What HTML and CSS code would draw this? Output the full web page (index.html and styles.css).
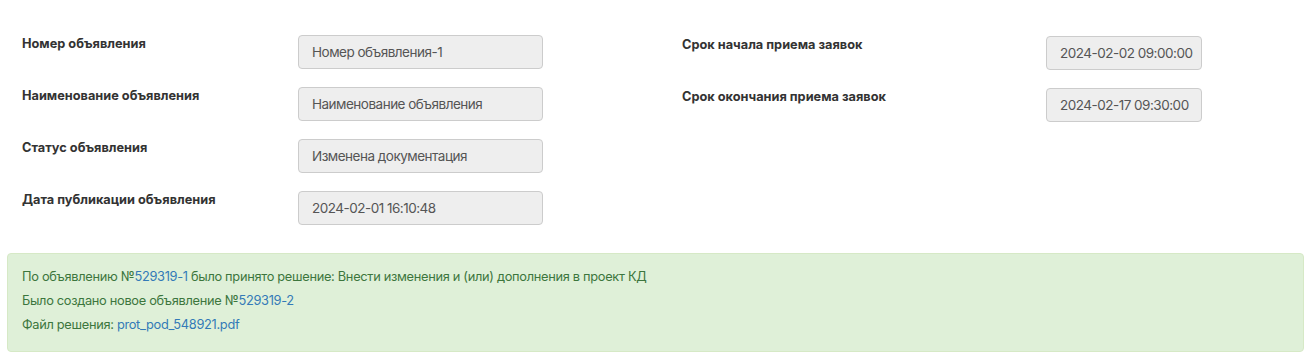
FILE: index.html
```html
<!DOCTYPE html>
<html lang="ru">
<head>
    <meta charset="UTF-8">
    <meta name="viewport" content="width=device-width, initial-scale=1.0">
    <title>Объявление</title>
    <link rel="stylesheet" href="styles.css">
</head>
<body>
    <div class="page">
        <div class="form">
            <div class="form-col form-col-left">
                <div class="field">
                    <div class="field-label">Номер объявления</div>
                    <div class="field-input">Номер объявления-1</div>
                </div>
                <div class="field">
                    <div class="field-label">Наименование объявления</div>
                    <div class="field-input">Наименование объявления</div>
                </div>
                <div class="field">
                    <div class="field-label">Статус объявления</div>
                    <div class="field-input">Изменена документация</div>
                </div>
                <div class="field">
                    <div class="field-label">Дата публикации объявления</div>
                    <div class="field-input">2024-02-01 16:10:48</div>
                </div>
            </div>
            <div class="form-col form-col-right">
                <div class="field">
                    <div class="field-label">Срок начала приема заявок</div>
                    <div class="field-input field-input-date">2024-02-02 09:00:00</div>
                </div>
                <div class="field">
                    <div class="field-label">Срок окончания приема заявок</div>
                    <div class="field-input field-input-date">2024-02-17 09:30:00</div>
                </div>
            </div>
        </div>

        <div class="alert-success">
            <p>По объявлению №<a href="#">529319-1</a> было принято решение: Внести изменения и (или) дополнения в проект КД</p>
            <p>Было создано новое объявление №<a href="#">529319-2</a></p>
            <p>Файл решения: <a href="#">prot_pod_548921.pdf</a></p>
        </div>
    </div>
</body>
</html>
```

FILE: styles.css
```css
body {
    margin: 0;
    padding: 0;
    font-family: Inter, 'Liberation Sans', sans-serif;
    background: #fff;
    color: #333;
}

.page {
    padding: 35px 1px 0 7px;
}

.form {
    display: flex;
}

.form-col {
    display: flex;
    flex-direction: column;
    gap: 18px;
}

.form-col-left {
    width: 660px;
    padding-left: 15px;
}

.form-col-right {
    margin-top: 1px;
}

.field {
    display: flex;
    align-items: flex-start;
}

.form-col-left .field-label {
    width: 276px;
}

.form-col-right .field-label {
    width: 364px;
}

.field-label {
    font-size: 12.75px;
    font-weight: 700;
    line-height: 18px;
    color: #333;
}

.field-input {
    box-sizing: border-box;
    width: 245px;
    height: 34px;
    padding: 0 13px;
    background: #eee;
    border: 1px solid #ccc;
    border-radius: 4px;
    font-size: 13.5px;
    letter-spacing: -0.5px;
    line-height: 32px;
    color: #555;
    white-space: nowrap;
}

.field-input-date {
    width: 156px;
}

.alert-success {
    margin-top: 28px;
    padding: 11px 14px 14px;
    background: #dff0d8;
    border: 1px solid #d6e9c6;
    border-radius: 4px;
    color: #3c763d;
    font-size: 12.8px;
    letter-spacing: -0.3px;
}

.alert-success p {
    margin: 0;
    line-height: 24px;
}

.alert-success a {
    color: #337ab7;
    text-decoration: none;
}
```
